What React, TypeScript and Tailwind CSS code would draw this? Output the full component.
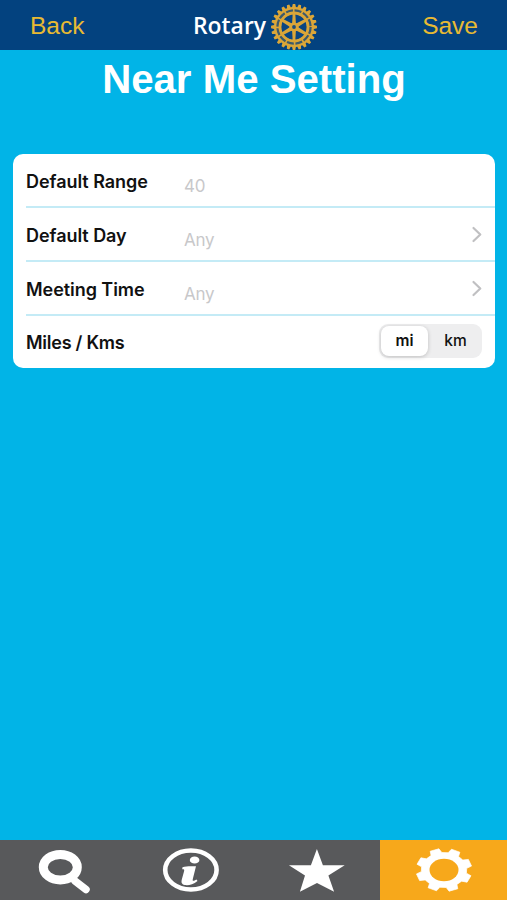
import type { ReactNode } from 'react';

const polar = (r: number, deg: number) => {
  const a = (deg * Math.PI) / 180;
  return `${(r * Math.cos(a)).toFixed(2)},${(r * Math.sin(a)).toFixed(2)}`;
};

function toothed(count: number, root: number, tip: number, rootHalf: number, tipHalf: number, offset: number) {
  const pts: string[] = [];
  for (let i = 0; i < count; i++) {
    const c = offset + (i * 360) / count;
    pts.push(polar(root, c - rootHalf), polar(tip, c - tipHalf), polar(tip, c + tipHalf), polar(root, c + rootHalf));
  }
  return pts.join(' ');
}

function RotaryWheel() {
  return (
    <svg width="48" height="48" viewBox="-24 -24 48 48" aria-hidden="true">
      <polygon points={toothed(24, 20, 23, 5.5, 3, 0)} fill="#dba638" />
      <circle r="16.6" fill="none" stroke="#3d5a6b" strokeWidth="2.2" strokeDasharray="7 1.7" />
      <circle r="13" fill="#0a4581" />
      {[0, 60, 120, 180, 240, 300].map((a) => (
        <polygon key={a} points="-1.9,-3 -1.3,-14 1.3,-14 1.9,-3" fill="#dba638" transform={`rotate(${a})`} />
      ))}
      <circle r="13.8" fill="none" stroke="#dba638" strokeWidth="2.4" />
      <circle r="4.6" fill="#dba638" />
      <circle r="1.9" fill="#1c4d7c" />
    </svg>
  );
}

function Chevron() {
  return (
    <svg width="12" height="18" viewBox="0 0 12 18" className="mr-[12px] ml-auto" aria-hidden="true">
      <path d="M2.5 3 9.3 9.5 2.5 16" fill="none" stroke="#c0c0c2" strokeWidth="2.2" strokeLinecap="round" strokeLinejoin="round" />
    </svg>
  );
}

function Row({ label, value, children }: { label: string; value?: string; children?: ReactNode }) {
  return (
    <div className="ml-[13px] flex h-[54px] items-center border-b-2 border-[#c4ebf6]">
      <span className="w-[158px] shrink-0 pt-[2px] text-[18px] font-semibold tracking-[-0.05px] text-[#111]">{label}</span>
      {value && <span className="pt-[13px] text-[17px] tracking-[-0.2px] text-[#c8c8ca]">{value}</span>}
      {children}
    </div>
  );
}

function Tab({ active, children }: { active?: boolean; children: ReactNode }) {
  return (
    <div className={active ? 'w-[127px] shrink-0 bg-[#f7a81b]' : 'min-w-0 flex-1 overflow-hidden bg-[#58595b]'}>
      <svg width="127" height="60" viewBox="0 0 127 60" className="max-w-none" aria-hidden="true">
        {children}
      </svg>
    </div>
  );
}

export default function App() {
  return (
    <div className="flex h-[900px] w-[507px] flex-col overflow-hidden bg-[#01b4e7] font-['Inter','Liberation_Sans',sans-serif]">
      <header className="flex h-[50px] shrink-0 items-center bg-[#03427f] font-['Liberation_Sans',Arial,sans-serif] text-[24.5px] text-[#e8ba33]">
        <span className="w-[194px] pt-[2px] pl-[30px]">Back</span>
        <div className="flex h-[50px] w-[124px] items-center">
          <svg width="76" height="50" viewBox="0 0 76 50" className="shrink-0">
            <text x="-1" y="34" textLength="73" lengthAdjust="spacingAndGlyphs" fill="#fff" className="font-['Open_Sans',sans-serif] text-[24px] font-semibold">
              Rotary
            </text>
          </svg>
          <div className="shrink-0 pt-[3px]">
            <RotaryWheel />
          </div>
        </div>
        <span className="ml-auto pt-[2px] pr-[29px]">Save</span>
      </header>

      <h1 className="h-[104px] shrink-0 pt-[6px] pl-px text-center font-['Liberation_Sans',Arial,sans-serif] text-[40.2px] leading-[48px] font-bold text-white">
        Near Me Setting
      </h1>

      <main className="mr-[12px] ml-[13px] h-[214px] shrink-0 overflow-hidden rounded-[10px] bg-white">
        <Row label="Default Range" value="40" />
        <Row label="Default Day" value="Any">
          <Chevron />
        </Row>
        <Row label="Meeting Time" value="Any">
          <Chevron />
        </Row>
        <div className="ml-[13px] flex h-[52px] items-center">
          <span className="text-[18px] font-semibold tracking-[-0.25px] text-[#111]">Miles / Kms</span>
          <div className="mr-[13px] mb-[3px] ml-auto flex h-[34px] w-[103px] rounded-[9px] bg-[#eeeeef] p-[2px] text-[15.5px] text-[#111]">
            <span className="flex w-[47px] items-center justify-center rounded-[8px] bg-white font-semibold shadow-[0_1px_4px_rgba(0,0,0,0.2)]">mi</span>
            <span className="flex flex-1 items-center justify-center pl-[3px] font-medium">km</span>
          </div>
        </div>
      </main>

      <nav className="mt-auto flex h-[60px] shrink-0">
        <Tab>
          <path d="M75 41 86 49.5" stroke="#fff" strokeWidth="7.5" strokeLinecap="round" />
          <ellipse cx="60.3" cy="27.2" rx="17" ry="12.8" fill="none" stroke="#fff" strokeWidth="9" />
        </Tab>
        <Tab>
          <ellipse cx="63.9" cy="30" rx="25.7" ry="19.5" fill="none" stroke="#fff" strokeWidth="4.6" />
          <ellipse cx="67.6" cy="20" rx="4.8" ry="3.6" fill="#fff" />
          <path d="M55.5 27.2 C59 25.9 63.5 26.2 69 26.2 L65.8 39 C65.3 41.5 66.5 41.2 69.5 39.5 L70.5 41 C66 44.6 61.5 45.6 57.8 45 C54.3 44.3 54.2 42 54.8 39.5 L57 31.5 C57.5 29.6 57.3 29.1 55.2 29.2 Z" fill="#fff" />
        </Tab>
        <Tab>
          <polygon points="63.9,9 69.9,25.2 91.7,25.2 75.4,35.5 81.1,51.7 64,43 46.9,51.7 52,35.5 35.9,25.2 57.9,25.2" fill="#fff" />
        </Tab>
        <Tab active>
          <g transform="translate(64 30) scale(1 0.77)">
            <polygon points={toothed(8, 22.8, 28, 14.5, 9.5, -20)} fill="#fff" stroke="#fff" strokeWidth="0.8" strokeLinejoin="round" />
            <circle r="14.5" fill="#f7a81b" />
          </g>
        </Tab>
      </nav>
    </div>
  );
}
